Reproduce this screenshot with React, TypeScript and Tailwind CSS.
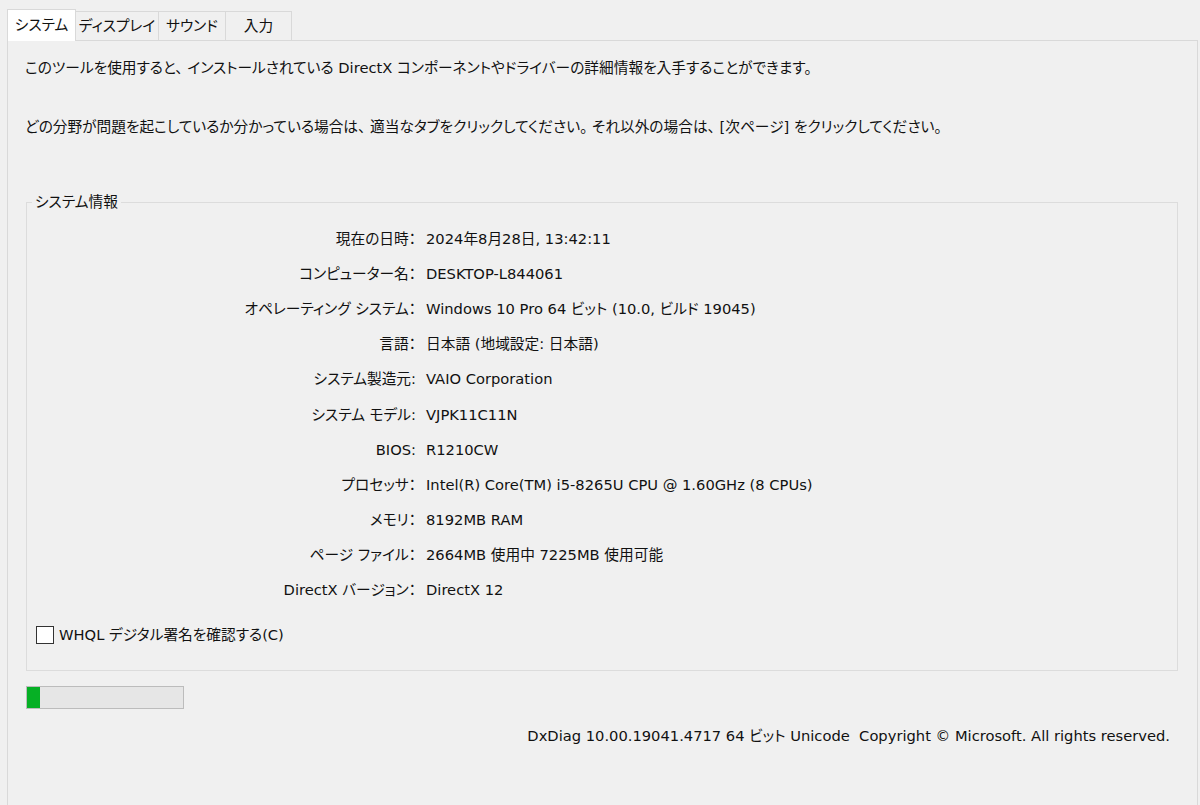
import React from 'react'

const rows: [string, string][] = [
    ['現在の日時：', '2024年8月28日, 13:42:11'],
    ['コンピューター名：', 'DESKTOP-L844061'],
    ['オペレーティング システム：', 'Windows 10 Pro 64 ビット (10.0, ビルド 19045)'],
    ['言語：', '日本語 (地域設定: 日本語)'],
    ['システム製造元:', 'VAIO Corporation'],
    ['システム モデル:', 'VJPK11C11N'],
    ['BIOS:', 'R1210CW'],
    ['プロセッサ：', 'Intel(R) Core(TM) i5-8265U CPU @ 1.60GHz (8 CPUs)'],
    ['メモリ：', '8192MB RAM'],
    ['ページ ファイル：', '2664MB 使用中 7225MB 使用可能'],
    ['DirectX バージョン：', 'DirectX 12'],
]

const tabs: [string, string][] = [
    ['ディスプレイ', 'w-[83px]'],
    ['サウンド', 'w-[67px]'],
    ['入力', 'w-[66px]'],
]

export default function App() {
    return (
        <div
            className="w-[1200px] h-[805px] bg-[#f0f0f0] text-[14.7px] text-[#111] flex flex-col overflow-hidden [font-feature-settings:'palt']"
            style={{ fontFamily: '"DejaVu Sans", "Noto Sans CJK JP", sans-serif' }}
        >
            {/* tab strip */}
            <div className="flex items-end pl-[7px] pt-[8px] h-[40px] relative z-10">
                <div className="w-[69px] h-[32px] bg-white border border-b-0 border-[#d9d9d9] flex items-center justify-center -mb-px leading-none">
                    システム
                </div>
                {tabs.map(([t, w]) => (
                    <div
                        key={t}
                        className={`${w} h-[29px] bg-[#f0f0f0] border border-l-0 border-b-0 border-[#d9d9d9] flex items-center justify-center leading-none`}
                    >
                        {t}
                    </div>
                ))}
            </div>

            {/* panel */}
            <div className="flex-1 ml-[7px] w-[1191px] border border-b-0 border-[#d9d9d9] bg-[#f0f0f0] pl-[17px] pr-[19px] pt-[17px]">
                <p className="leading-[20px]">
                    このツールを使用すると、 インストールされている DirectX コンポーネントやドライバーの詳細情報を入手することができます。
                </p>
                <p className="leading-[20px] mt-[39px]">
                    どの分野が問題を起こしているか分かっている場合は、 適当なタブをクリックしてください。 それ以外の場合は、 [次ページ] をクリックしてください。
                </p>

                <fieldset className="mt-[55px] ml-px border border-[#dcdcdc] px-[5px] pb-[24px]">
                    <legend className="px-[3px] leading-[20px]">システム情報</legend>
                    <div className="mt-[9px] h-[377px] overflow-hidden">
                        {rows.map(([label, value]) => (
                            <div key={label} className="grid grid-cols-[384px_1fr] gap-x-[10px] h-[35.2px] items-center">
                                <span className="text-right">{label}</span>
                                <span>{value}</span>
                            </div>
                        ))}
                    </div>
                    <label className="mt-[26px] ml-[4px] flex items-center gap-[5px]">
                        <span className="w-[18px] h-[18px] bg-white border border-[#333]" />
                        <span>WHQL デジタル署名を確認する(C)</span>
                    </label>
                </fieldset>

                <div className="mt-[15px] ml-px w-[158px] h-[23px] border border-[#bcbcbc] bg-[#e6e6e6]">
                    <div className="w-[13px] h-full bg-[#06b025]" />
                </div>

                <div className="mt-[17px] text-right pr-[8px] leading-[20px]">
                    DxDiag 10.00.19041.4717 64 ビット Unicode&nbsp; Copyright © Microsoft. All rights reserved.
                </div>
            </div>
        </div>
    )
}
